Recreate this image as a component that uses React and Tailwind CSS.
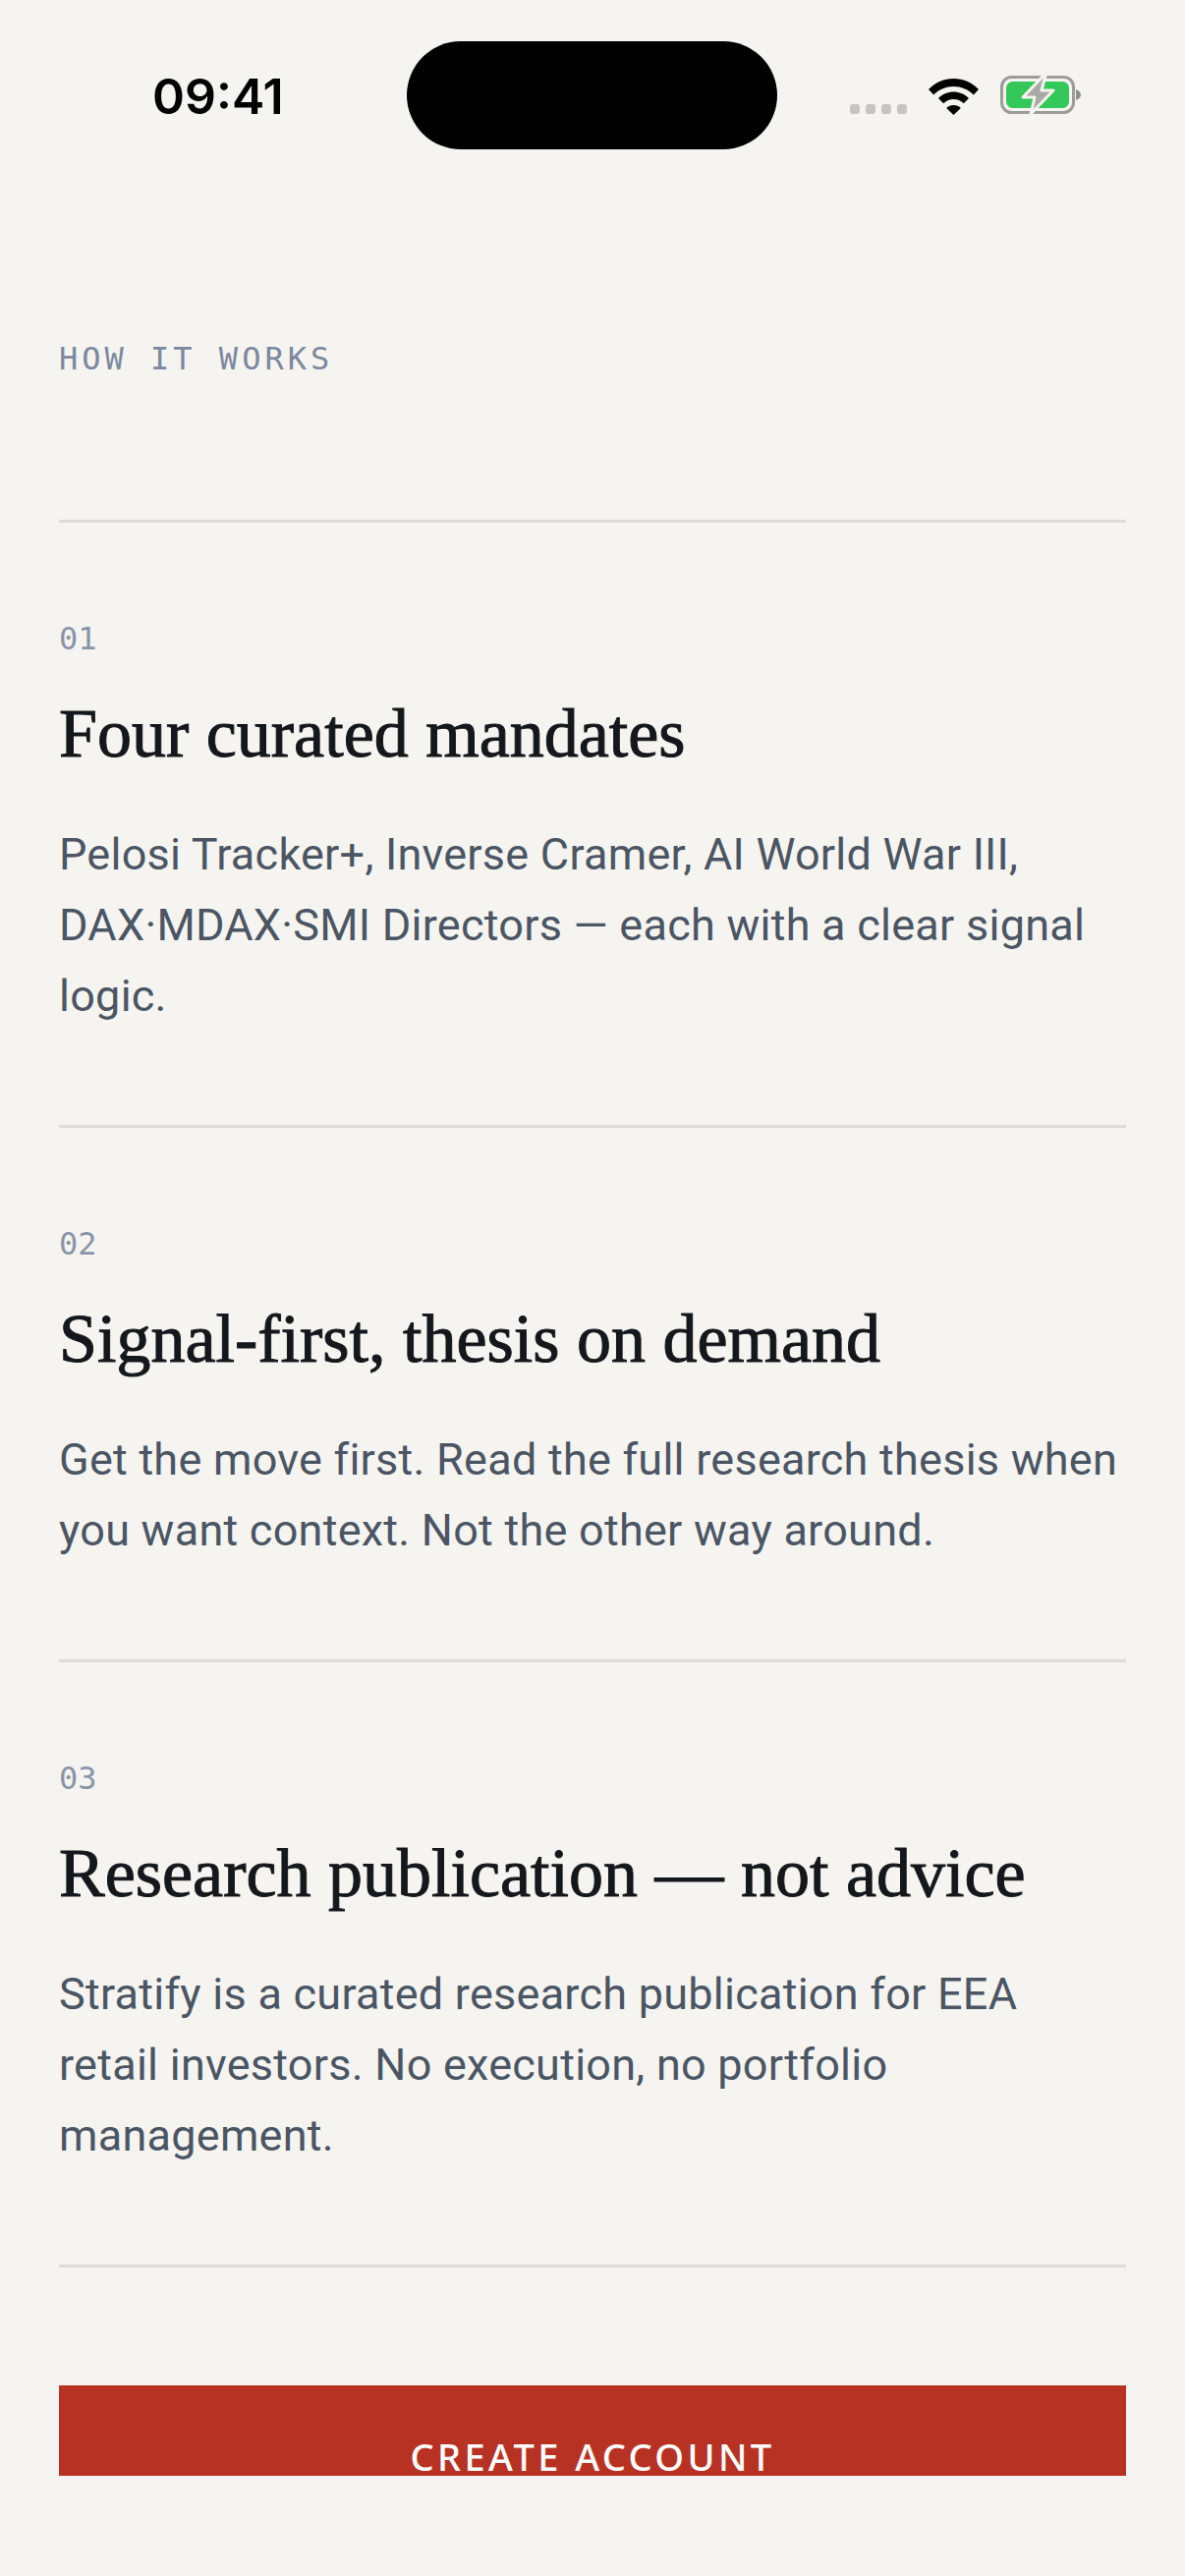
import React from 'react';

const steps = [
  {
    num: '01',
    title: 'Four curated mandates',
    body: 'Pelosi Tracker+, Inverse Cramer, AI World War III, DAX·MDAX·SMI Directors — each with a clear signal logic.',
  },
  {
    num: '02',
    title: 'Signal-first, thesis on demand',
    body: 'Get the move first. Read the full research thesis when you want context. Not the other way around.',
  },
  {
    num: '03',
    title: 'Research publication — not advice',
    body: 'Stratify is a curated research publication for EEA retail investors. No execution, no portfolio management.',
  },
];

const WifiIcon = () => (
  <svg width="51" height="37" viewBox="0 0 51 37" className="block">
    <path d="M25.500 0C35 0 44 3.800 51 11l-5.200 5.400C40.200 10.900 33 8 25.500 8S10.800 10.900 5.200 16.400L0 11C7 3.800 16 0 25.500 0Z" fill="#000" />
    <path d="M25.500 13.500c5.800 0 11.300 2.300 15.500 6.400l-5.200 5.400c-2.800-2.700-6.400-4.200-10.300-4.200s-7.500 1.500-10.300 4.200L10 19.900c4.200-4.100 9.700-6.400 15.500-6.400Z" fill="#000" />
    <path d="M25.500 27c2.800 0 5.400 1 7.400 2.900L25.500 37l-7.400-7.100c2-1.900 4.600-2.900 7.400-2.900Z" fill="#000" />
  </svg>
);

const BatteryIcon = () => (
  <svg width="82" height="41" viewBox="0 0 82 41" className="block">
    <rect x="1.500" y="2.500" width="73" height="36" rx="10" fill="none" stroke="#9c9c9a" strokeWidth="3" />
    <rect x="6" y="7" width="64" height="27" rx="6.500" fill="#34c759" />
    <path d="M77 15c3 1 5 3 5 5.500S80 25 77 26Z" fill="#8f8f8d" />
    <path d="M44 1 23 23h12l-4 17 23-24H42l4-15Z" fill="#a9a9a7" stroke="#f5f4f0" strokeWidth="3" strokeLinejoin="round" />
  </svg>
);

const StatusBar = () => (
  <div className="flex h-[152px] items-start pl-[155px] pr-[106px] pt-[42px]">
    <div className="w-[259px] pt-[25px] font-['Inter',sans-serif] text-[50px] leading-[62px] font-semibold text-black">09:41</div>
    <div className="h-[110px] w-[377px] rounded-[55px] bg-black" />
    <div className="ml-[74px] flex items-end pt-[34px]">
      <div className="mb-px flex gap-[6px]">
        <span className="h-[10px] w-[10px] rounded-[3px] bg-[#c6c5c3]" />
        <span className="h-[10px] w-[10px] rounded-[3px] bg-[#c6c5c3]" />
        <span className="h-[10px] w-[10px] rounded-[3px] bg-[#c6c5c3]" />
        <span className="h-[10px] w-[10px] rounded-[3px] bg-[#c6c5c3]" />
      </div>
      <div className="ml-[22px]"><WifiIcon /></div>
      <div className="ml-[22px]"><BatteryIcon /></div>
    </div>
  </div>
);

const App = () => {
  return (
    <div className="h-[2622px] overflow-hidden bg-[#f5f4f0]">
      <StatusBar />

      <div className="px-[60px]">
        <div className="mt-[191px] font-['DejaVu_Sans_Mono',monospace] text-[32px] leading-[44px] font-light tracking-[4px] text-[#7c889f]">
          HOW IT WORKS
        </div>

        <div className="mt-[142px] border-t-[3px] border-[#dddcd7]">
          {steps.map(step => (
            <div key={step.num} className="border-b-[3px] border-[#dddcd7] pt-[96px] pb-[95px]">
              <div className="font-['DejaVu_Sans_Mono',monospace] text-[32px] leading-[44px] text-[#8a94a8]">{step.num}</div>
              <h3 className="mt-[35px] font-['Liberation_Serif',serif] text-[70px] leading-[80px] [-webkit-text-stroke:1px_#14171b] text-[#14171b]">{step.title}</h3>
              <p className="mt-[47px] font-['Roboto',sans-serif] text-[45px] leading-[72px] tracking-[0.25px] text-[#4b5563]">{step.body}</p>
            </div>
          ))}
        </div>

        <button className="mt-[120px] flex h-[92px] w-full items-end justify-center bg-[#b83224] pb-[2px] font-['Noto_Sans',sans-serif] text-[38px] leading-[36px] font-medium tracking-[3.400px] text-white">
          CREATE ACCOUNT
        </button>
      </div>
    </div>
  );
};

export default App;
